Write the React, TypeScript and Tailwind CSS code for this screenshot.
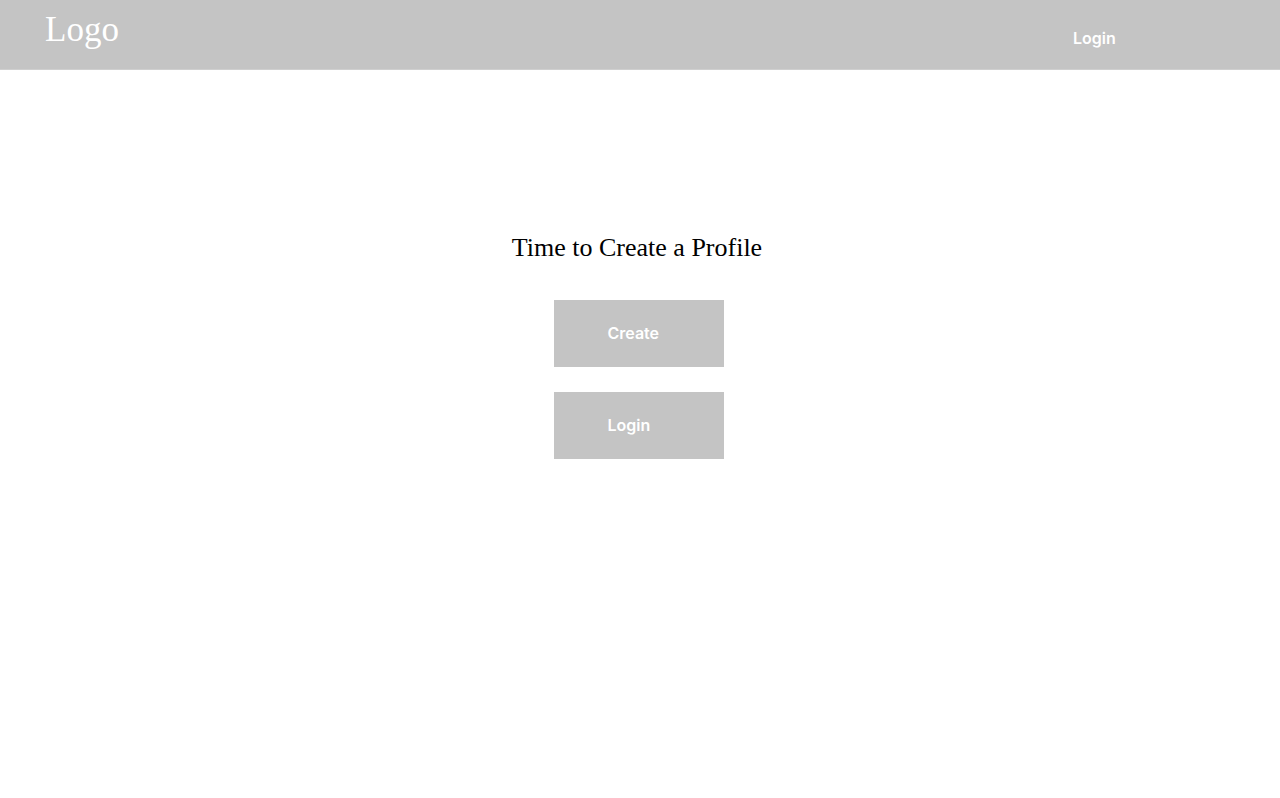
import React from "react";

const serif = { fontFamily: '"Liberation Serif", "DejaVu Serif", serif' };

function GreyButton({ label }: { label: string }) {
  return (
    <button className="w-[170px] h-[67px] bg-[#c4c4c4] text-white text-[16px] font-semibold text-left pl-[54px] pb-[2px] font-['Inter',sans-serif]">
      {label}
    </button>
  );
}

export default function App() {
  return (
    <div className="w-full min-h-[798px] bg-white">
      {/* Header */}
      <header className="h-[70px] w-full bg-[#c4c4c4] border-b border-[#cfcfcf] flex items-start">
        <div className="pl-[45px] pt-[9px] text-white text-[35px] leading-[42px]" style={serif}>
          Logo
        </div>
        <div className="flex-1" />
        <div className="w-[207px] pt-[27px] text-white text-[16px] font-semibold leading-[22px] font-['Inter',sans-serif]">
          Login
        </div>
      </header>

      {/* Main */}
      <main className="flex flex-col items-center pt-[160px]">
        <h1 className="text-[26px] leading-[36px] text-black mr-[6px]" style={serif}>
          Time to Create a Profile
        </h1>
        <div className="flex flex-col gap-[25px] mt-[34px] mr-[3px]">
          <GreyButton label="Create" />
          <GreyButton label="Login" />
        </div>
      </main>
    </div>
  );
}
